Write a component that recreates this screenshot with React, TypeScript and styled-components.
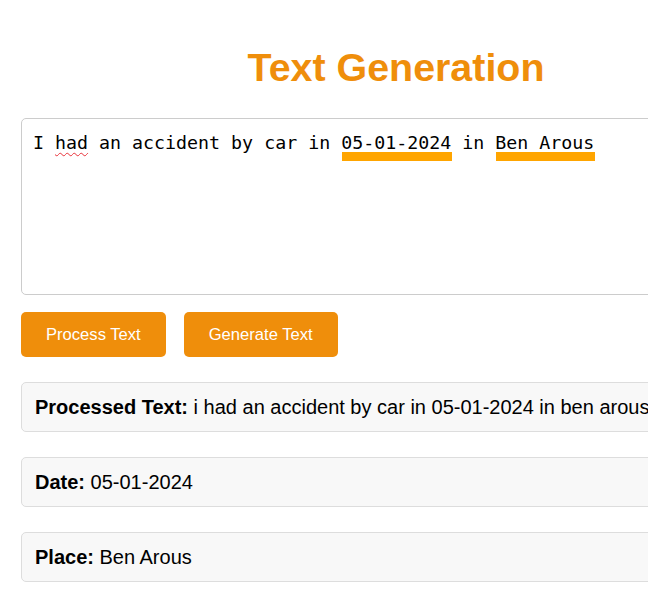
import React from "react";
import styled, { createGlobalStyle } from "styled-components";

const GlobalStyle = createGlobalStyle`
  html, body {
    margin: 0;
    padding: 0;
    background: #ffffff;
    overflow: hidden;
  }
  body {
    font-family: "Liberation Sans", Arial, sans-serif;
  }
`;

const Page = styled.div`
  width: 750px;
  padding: 45px 21px 0;
`;

const Title = styled.h1`
  margin: 0 0 28px;
  font-family: "Liberation Sans", Arial, sans-serif;
  font-size: 39.4px;
  line-height: 45px;
  font-weight: 700;
  color: #ef8e0b;
  text-align: center;
`;

const EditorWrap = styled.div`
  position: relative;
  height: 177px;
`;

const monoText = `
  font-family: "DejaVu Sans Mono", "Liberation Mono", monospace;
  font-size: 18.3px;
  line-height: 21.3px;
  padding: 13px 11px;
  white-space: pre-wrap;
  letter-spacing: 0;
`;

const Input = styled.textarea`
  ${monoText}
  display: block;
  box-sizing: border-box;
  width: 100%;
  height: 100%;
  margin: 0;
  border: 1px solid #cccccc;
  border-radius: 5px;
  resize: none;
  color: #000000;
  background: #ffffff;
  outline: none;
`;

const Mirror = styled.div`
  ${monoText}
  position: absolute;
  inset: 0;
  border: 1px solid transparent;
  color: transparent;
  pointer-events: none;
`;

const Misspelled = styled.span`
  text-decoration: underline wavy #e8323a;
  text-decoration-thickness: 1px;
  text-underline-offset: 3px;
`;

const Entity = styled.span`
  position: relative;
  &::after {
    content: "";
    position: absolute;
    left: 1px;
    right: -1px;
    top: 20px;
    height: 9px;
    background: #ffa500;
  }
`;

const Actions = styled.div`
  display: flex;
  gap: 18px;
  margin-top: 17px;
`;

const Button = styled.button`
  font-family: "Liberation Sans", Arial, sans-serif;
  font-size: 16.6px;
  line-height: 19px;
  padding: 13px 25px;
  border: none;
  border-radius: 5px;
  background: #ef8e0b;
  color: #ffffff;
  cursor: pointer;
`;

const Results = styled.div`
  display: flex;
  flex-direction: column;
  gap: 25px;
  margin-top: 25px;
`;

const ResultBox = styled.div`
  box-sizing: border-box;
  height: 50px;
  padding: 13px 13px;
  border: 1px solid #dddddd;
  border-radius: 5px;
  background: #f8f8f8;
  font-family: "Liberation Sans", Arial, sans-serif;
  font-size: 20px;
  line-height: 22px;
  color: #000000;
  white-space: nowrap;
`;

const Label = styled.strong`
  font-weight: 700;
`;

const sentence = "I had an accident by car in 05-01-2024 in Ben Arous";

export default function App() {
  return (
    <>
      <GlobalStyle />
      <Page>
        <Title>Text Generation</Title>
        <EditorWrap>
          <Input defaultValue={sentence} spellCheck={false} />
          <Mirror aria-hidden="true">
            I <Misspelled>had</Misspelled> an accident by car in{" "}
            <Entity>05-01-2024</Entity> in <Entity>Ben Arous</Entity>
          </Mirror>
        </EditorWrap>
        <Actions>
          <Button>Process Text</Button>
          <Button>Generate Text</Button>
        </Actions>
        <Results>
          <ResultBox>
            <Label>Processed Text:</Label> i had an accident by car in 05-01-2024 in ben arous
          </ResultBox>
          <ResultBox>
            <Label>Date:</Label> 05-01-2024
          </ResultBox>
          <ResultBox>
            <Label>Place:</Label> Ben Arous
          </ResultBox>
        </Results>
      </Page>
    </>
  );
}
